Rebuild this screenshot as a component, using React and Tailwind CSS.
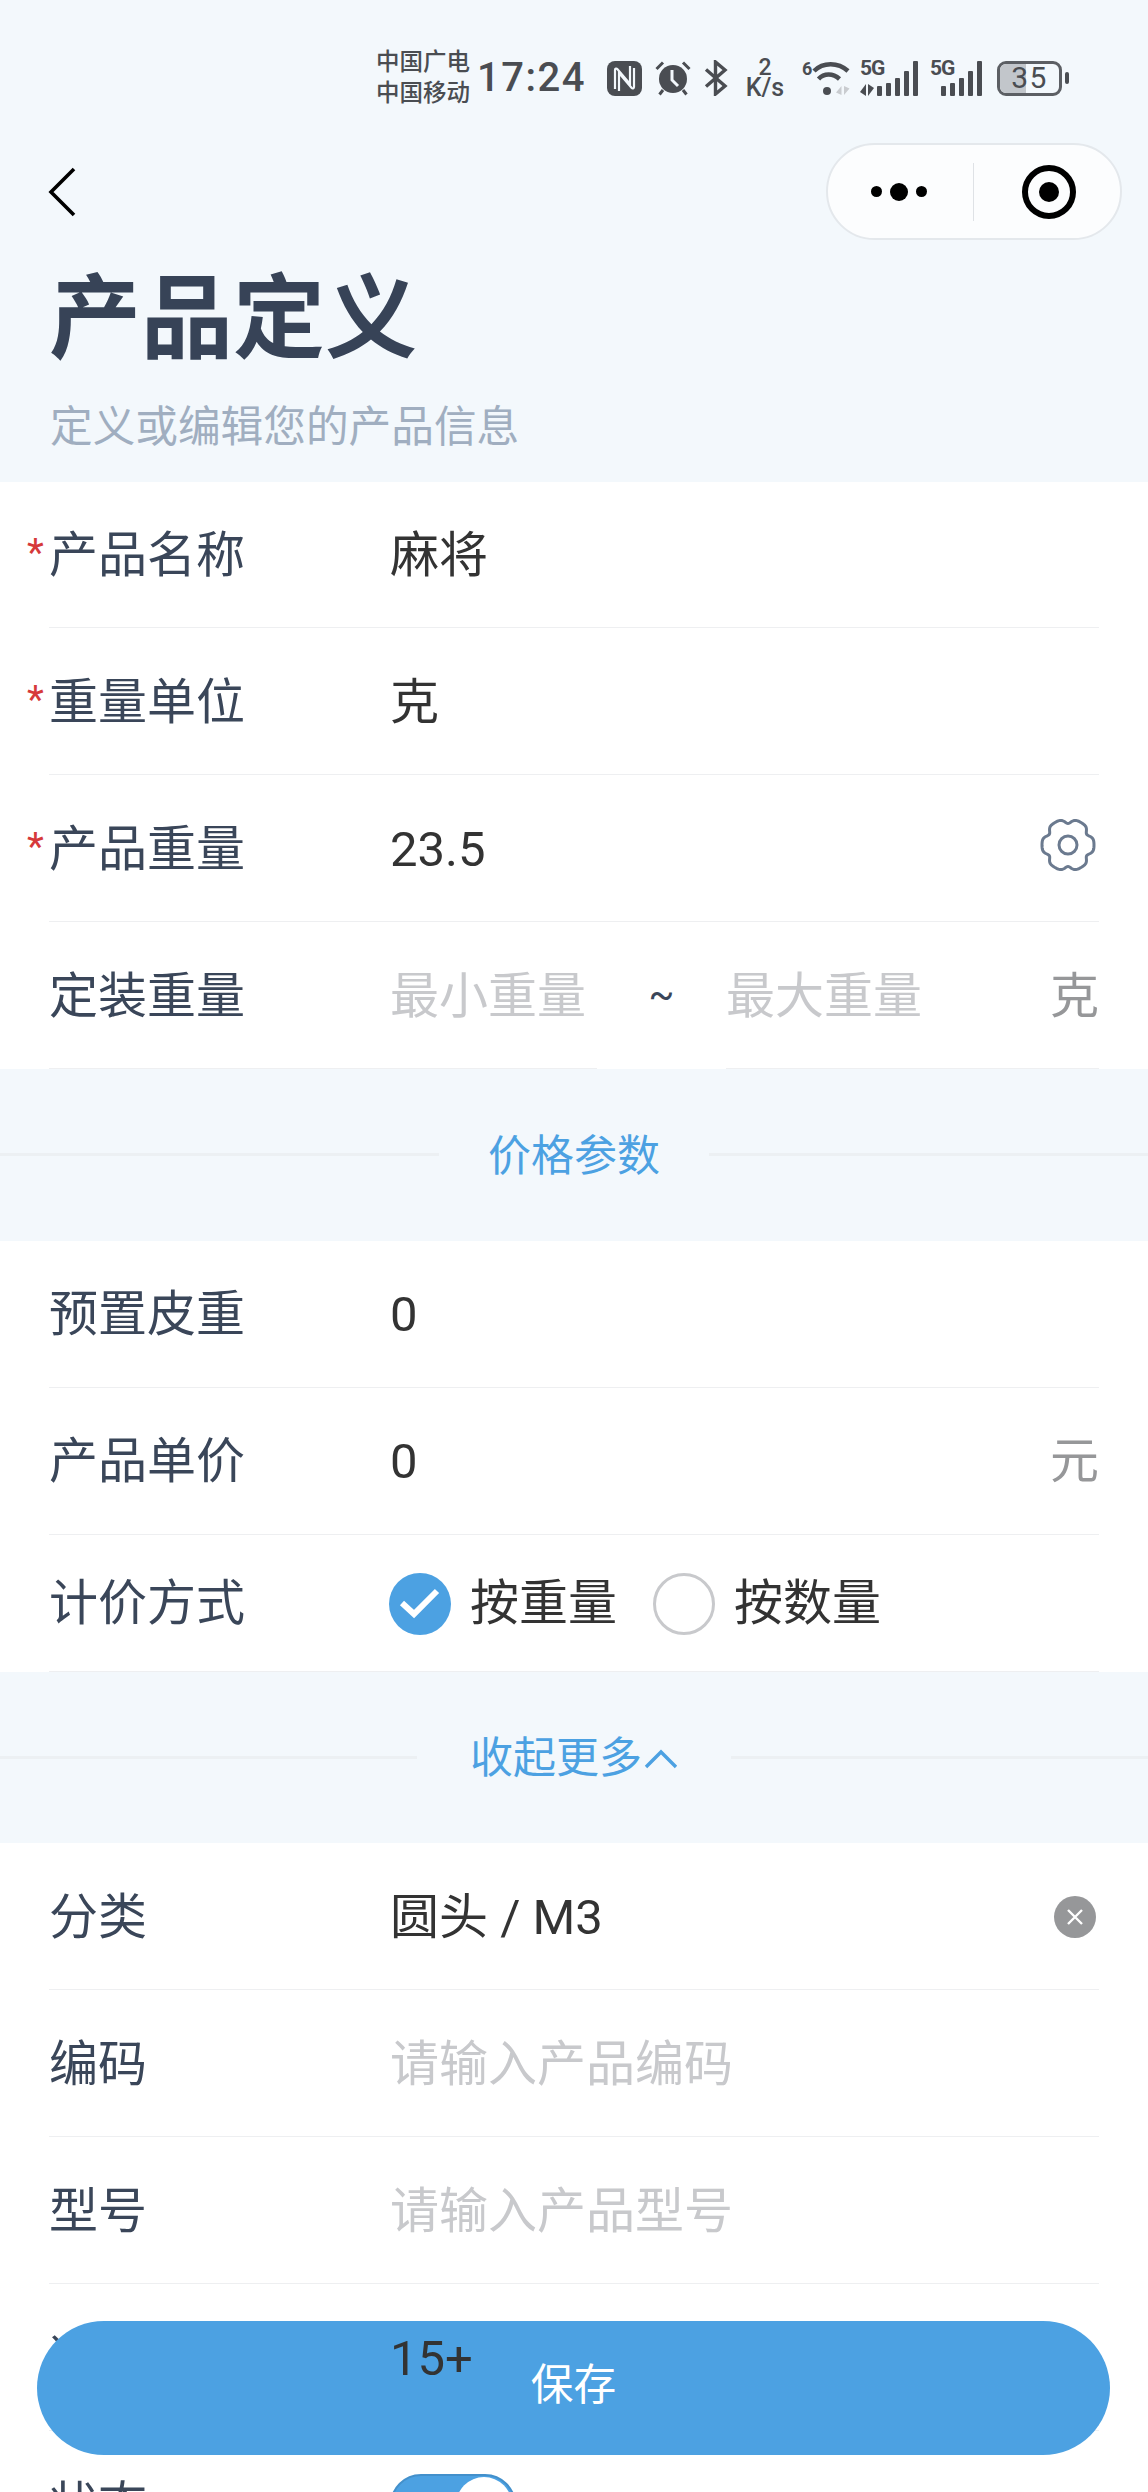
import React from "react";

const gearPath =
  Array.from({ length: 181 }, (_, i) => {
    const t = (i / 180) * Math.PI * 2;
    const r = 26 - 4.5 * Math.pow((1 - Math.cos(6 * t)) / 2, 3);
    return `${i === 0 ? "M" : "L"}${(28 + r * Math.cos(t)).toFixed(2)} ${(28 + r * Math.sin(t)).toFixed(2)}`;
  }).join(" ") + " Z";

const Bars = ({ heights }) => (
  <div className="flex items-end gap-[4px]">
    {heights.map((h, i) => (
      <div key={i} className="w-[5px] rounded-[1px] bg-[#4a4d52]" style={{ height: h }} />
    ))}
  </div>
);

const StatusBar = () => (
  <div className="flex h-[44px] items-center pl-[376px] text-[#4a4d52]">
    <div className="w-[97px] text-[23.5px] font-medium leading-[31px]">
      <div>中国广电</div>
      <div>中国移动</div>
    </div>
    <div className="w-[134px] pl-[4px] text-[40px] font-medium leading-none tracking-[1.5px]">17:24</div>
    {/* nfc */}
    <svg width="35" height="35" viewBox="0 0 35 35" className="shrink-0">
      <rect width="35" height="35" rx="8" fill="#4a4d52" />
      <path d="M8 28V9c0-1.500 1.500-1.800 2.500-.8L23 23V5M27 7v19c0 1.500-1.500 1.800-2.500.8L12 12v18" fill="none" stroke="#f3f8fc" strokeWidth="2.200" />
    </svg>
    {/* alarm */}
    <svg width="36" height="36" viewBox="0 0 36 36" className="ml-[13px] shrink-0">
      <circle cx="18" cy="19" r="14" fill="#4a4d52" />
      <path d="M1.500 9 8 2.500M34.500 9 28 2.500M8 30l-3.500 4.500M28 30l3.500 4.500" stroke="#4a4d52" strokeWidth="3" fill="none" />
      <path d="M17 10v10l6 6" stroke="#f3f8fc" strokeWidth="3" fill="none" />
    </svg>
    {/* bluetooth */}
    <svg width="24" height="36" viewBox="0 0 24 36" className="ml-[13px] shrink-0">
      <path d="M2 9.500 21 26 11.500 34V2L21 10 2 26.500" fill="none" stroke="#4a4d52" strokeWidth="3.400" />
    </svg>
    <div className="ml-[15px] flex w-[44px] shrink-0 flex-col items-center font-medium">
      <span className="text-[23px] leading-[20px]">2</span>
      <span className="text-[25px] leading-[20px]">K/s</span>
    </div>
    {/* wifi */}
    <div className="relative ml-[15px] h-[36px] w-[50px] shrink-0">
      <span className="absolute left-0 top-[-2px] text-[18px] font-bold leading-[22px]">6</span>
      <svg width="50" height="36" viewBox="0 0 50 36" className="absolute left-0 top-0">
        <path d="M12 11C21 2 36 2 46 11M16.500 19C22 13 31 13 37.500 19" fill="none" stroke="#4a4d52" strokeWidth="4.500" />
        <circle cx="25" cy="31" r="4" fill="#4a4d52" />
        <path d="M39.500 35V26l-5.500 6.500zM42 26v9l5.500-6.500z" fill="#c9ccd0" />
      </svg>
    </div>
    {/* sim 1 */}
    <div className="relative ml-[8px] h-[36px] w-[58px] shrink-0">
      <span className="absolute left-0 top-[-3px] text-[21px] font-bold leading-[22px] tracking-[-1px]">5G</span>
      <svg width="16" height="12" viewBox="0 0 16 12" className="absolute bottom-0 left-0">
        <path d="M6 0v12L0 8zM8 12V0l6 4z" fill="#4a4d52" />
      </svg>
      <div className="absolute bottom-0 right-0">
        <Bars heights={[10, 13, 18, 25, 35]} />
      </div>
    </div>
    {/* sim 2 */}
    <div className="relative ml-[12px] h-[36px] w-[52px] shrink-0">
      <span className="absolute left-0 top-[-3px] text-[21px] font-bold leading-[22px] tracking-[-1px]">5G</span>
      <div className="absolute bottom-0 right-0">
        <Bars heights={[10, 13, 18, 25, 35]} />
      </div>
    </div>
    {/* battery */}
    <div className="relative ml-[15px] flex h-[35px] w-[65px] shrink-0 items-center justify-center overflow-hidden rounded-[9px] border-[3px] border-[#5c5f64]">
      <div className="absolute inset-y-0 left-0 w-[26px] bg-[#c2c6cb]" />
      <span className="relative text-[30px] leading-none tracking-[1.5px]">35</span>
    </div>
    <div className="ml-[3px] h-[12px] w-[4px] shrink-0 rounded-full bg-[#4a4d52]" />
  </div>
);

const NavBar = () => (
  <div className="mt-[43px] flex h-[97px] items-center justify-between pl-[47px] pr-[26px]">
    <svg width="30" height="52" viewBox="0 0 30 52" className="shrink-0">
      <path d="M27 3 4 26l23 23" fill="none" stroke="#000" strokeWidth="3.600" />
    </svg>
    <div className="flex h-[97px] w-[296px] items-center rounded-full border-2 border-[#e4e8ec] bg-[#fcfdfe]">
      <div className="flex w-[145px] items-center justify-center gap-[8px] pr-[4px]">
        <div className="size-[11px] rounded-full bg-black" />
        <div className="size-[18px] rounded-full bg-black" />
        <div className="size-[11px] rounded-full bg-black" />
      </div>
      <div className="h-[58px] w-px bg-[#dfe2e6]" />
      <div className="flex flex-1 items-center justify-center pl-[4px]">
        <div className="flex size-[54px] items-center justify-center rounded-full border-[6px] border-black">
          <div className="size-[20px] rounded-full bg-black" />
        </div>
      </div>
    </div>
  </div>
);

const Row = ({ label, required, last, first, children }) => (
  <div className={`mx-[49px] flex items-center border-b-[1.500px] border-[#eeeff1] pt-[2px] ${first ? "h-[146px]" : last ? "h-[137px]" : "h-[147px]"}`}>
    <div className="relative w-[341px] shrink-0 text-[49px] leading-none text-[#3a4659]">
      {required && <span className="absolute left-[-22px] top-[3px] text-[39px] leading-none text-[#d6393a]">*</span>}
      {label}
    </div>
    <div className="flex min-w-0 flex-1 items-center text-[49px] leading-none text-[#333]">{children}</div>
  </div>
);

const SectionLine = ({ children, width }) => (
  <div className="flex h-[171.500px] items-center bg-[#f3f8fc]">
    <div className="h-[3px] flex-1 bg-[#ecf0f3]" />
    <div className={`flex items-center justify-center pt-[3px] text-[43px] leading-none text-[#4ca1e2] ${width}`}>{children}</div>
    <div className="h-[3px] flex-1 bg-[#ecf0f3]" />
  </div>
);

const Radio = ({ checked, children }) => (
  <div className="flex items-center">
    {checked ? (
      <svg width="62" height="62" viewBox="0 0 62 62" className="shrink-0">
        <circle cx="31" cy="31" r="31" fill="#4ca1e2" />
        <path d="M13 30l12 11 23-23" fill="none" stroke="#fff" strokeWidth="6" />
      </svg>
    ) : (
      <div className="size-[62px] shrink-0 rounded-full border-[3px] border-[#c8c9cc]" />
    )}
    <span className="ml-[19px]">{children}</span>
  </div>
);

export default function App() {
  return (
    <div className="relative h-[2492px] w-[1148px] overflow-hidden bg-[#f3f8fc] font-['Roboto','Noto_Sans_CJK_SC',sans-serif]">
      <div className="h-[482px] pt-[56px]">
        <StatusBar />
        <NavBar />
        <h1 className="ml-[49px] mt-[26px] text-[92px] font-bold leading-[108px] text-[#374357]">产品定义</h1>
        <p className="ml-[50px] mt-[28px] text-[42.670px] leading-[50px] text-[#a0aec0]">定义或编辑您的产品信息</p>
      </div>

      <section className="bg-white">
        <Row first required label="产品名称">麻将</Row>
        <Row required label="重量单位">克</Row>
        <Row required label="产品重量">
          <span className="flex-1">23.5</span>
          <svg width="56" height="56" viewBox="0 0 56 56" className="mb-[8px] mr-[3px] shrink-0">
            <path d={gearPath} fill="none" stroke="#6b7a8f" strokeWidth="3" />
            <circle cx="28" cy="28" r="9" fill="none" stroke="#6b7a8f" strokeWidth="3" />
          </svg>
        </Row>
        <div className="flex h-[147px] items-center px-[49px] text-[49px] leading-none">
          <div className="flex h-full w-[548px] items-center border-b-[1.500px] border-[#eeeff1] pt-[2px]">
            <div className="w-[341px] text-[#3a4659]">定装重量</div>
            <div className="text-[#c8c9cc]">最小重量</div>
          </div>
          <div className="flex w-[129px] items-center justify-center pb-[2px] text-[38px] text-[#3a4659]">~</div>
          <div className="flex h-full flex-1 items-center justify-between border-b-[1.500px] border-[#eeeff1] pt-[2px]">
            <span className="text-[#c8c9cc]">最大重量</span>
            <span className="text-[#969799]">克</span>
          </div>
        </div>
      </section>

      <SectionLine width="w-[270px]">价格参数</SectionLine>

      <section className="bg-white">
        <Row label="预置皮重">0</Row>
        <Row label="产品单价">
          <span className="flex-1">0</span>
          <span className="text-[#969799]">元</span>
        </Row>
        <Row last label="计价方式">
          <div className="-ml-[1px] flex items-center gap-[36px]">
            <Radio checked>按重量</Radio>
            <Radio>按数量</Radio>
          </div>
        </Row>
      </section>

      <SectionLine width="w-[314px]">
        收起更多
        <svg width="34" height="22" viewBox="0 0 34 22" className="ml-[2px] shrink-0">
          <path d="M2 19 17 4l15 15" fill="none" stroke="#4ca1e2" strokeWidth="3.400" />
        </svg>
      </SectionLine>

      <section className="bg-white">
        <Row label="分类">
          <span className="flex-1">圆头 / M3</span>
          <div className="mr-[3px] flex size-[42px] items-center justify-center rounded-full bg-[#969799]">
            <svg width="20" height="20" viewBox="0 0 20 20">
              <path d="M3 3l14 14M17 3 3 17" stroke="#fff" strokeWidth="2.400" fill="none" />
            </svg>
          </div>
        </Row>
        <Row label="编码"><span className="text-[#c8c9cc]">请输入产品编码</span></Row>
        <Row label="型号"><span className="text-[#c8c9cc]">请输入产品型号</span></Row>
        <Row label="适龄">
          {/* this value paints above the save button in the reference */}
          <span className="relative z-10">15+</span>
        </Row>
        <Row label="状态">
          <div className="flex h-[62px] w-[126px] items-center justify-end rounded-full border-2 border-[#4390cb] bg-[#4ca1e2] pr-[2px]">
            <div className="size-[56px] rounded-full bg-white" />
          </div>
        </Row>
      </section>

      <button className="absolute bottom-[37px] left-[37px] flex h-[134px] w-[1073px] items-center justify-center rounded-full bg-[#4ca1e2] pb-[6px] text-[42.670px] leading-none text-white">
        保存
      </button>
    </div>
  );
}
